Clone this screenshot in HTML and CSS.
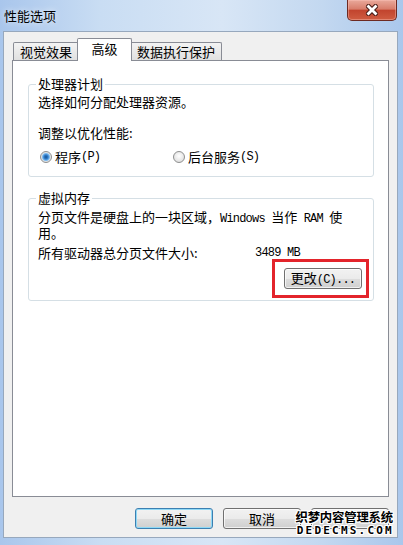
FILE: index.html
```html
<!DOCTYPE html>
<html lang="zh-CN">
<head>
    <meta charset="UTF-8">
    <meta name="viewport" content="width=device-width, initial-scale=1.0">
    <title>性能选项</title>
    <link rel="stylesheet" href="styles.css">
</head>
<body>
    <div class="window">
        <div class="titlebar">
            <span class="title">性能选项</span>
            <button class="close-btn" aria-label="关闭">
                <svg width="14" height="12" viewBox="0 0 14 12">
                    <path d="M3.5 2.5 L10.5 9.5 M10.5 2.5 L3.5 9.5" stroke="#4a1d17" stroke-width="5" stroke-linecap="round"/>
                    <path d="M3.5 2.5 L10.5 9.5 M10.5 2.5 L3.5 9.5" stroke="#ffffff" stroke-width="2.8" stroke-linecap="square"/>
                </svg>
            </button>
        </div>

        <div class="dialog">
            <div class="tabs">
                <div class="tab">视觉效果</div>
                <div class="tab active">高级</div>
                <div class="tab">数据执行保护</div>
            </div>

            <div class="tab-panel">
                <fieldset class="group">
                    <legend>处理器计划</legend>
                    <p class="intro">选择如何分配处理器资源。</p>
                    <p class="subhead">调整以优化性能:</p>
                    <div class="options">
                        <label class="option first"><span class="radio checked"></span>程序<span class="latin">(P)</span></label>
                        <label class="option"><span class="radio"></span>后台服务<span class="latin">(S)</span></label>
                    </div>
                </fieldset>

                <fieldset class="group memory">
                    <legend>虚拟内存</legend>
                    <p class="intro">分页文件是硬盘上的一块区域，<span class="latin">Windows </span>当作<span class="latin"> RAM </span>使<br>用。</p>
                    <div class="size-row">
                        <span class="size-label">所有驱动器总分页文件大小:</span>
                        <span class="latin">3489 MB</span>
                    </div>
                    <div class="change-row">
                        <span class="highlight">
                            <button class="btn">更改<span class="latin">(C)...</span></button>
                        </span>
                    </div>
                </fieldset>
            </div>

            <div class="actions">
                <button class="btn default">确定</button>
                <button class="btn">取消</button>
                <!-- label is hidden under the watermark in the screenshot -->
                <button class="btn" aria-label="应用" disabled></button>
            </div>

            <div class="watermark">
                <div class="watermark-cn">织梦内容管理系统</div>
                <div class="watermark-en">DEDECMS.COM</div>
            </div>
        </div>
    </div>
</body>
</html>
```

FILE: styles.css
```css
* {
    box-sizing: border-box;
}

body {
    margin: 0;
    width: 403px;
    height: 545px;
    overflow: hidden;
    font-family: "Noto Sans CJK SC", "Noto Sans", sans-serif;
    font-size: 13px;
    line-height: 14px;
    color: #000;
}

.latin {
    font-family: "Liberation Mono", monospace;
    font-size: 12px;
    letter-spacing: -0.8px;
}

/* window frame */
.window {
    height: 545px;
    display: flex;
    flex-direction: column;
    padding: 0 5px 7px 3px;
    background: linear-gradient(90deg, #a9c6ec 0%, #c9ddf3 25%, #d8e6f6 55%, #c3d8f0 80%, #aac7ec 100%);
}

.titlebar {
    height: 31px;
    display: flex;
    align-items: center;
    justify-content: space-between;
}

.title {
    padding-left: 1px;
    font-size: 13px;
    text-shadow: 0 0 6px rgba(255, 255, 255, 0.9);
}

.close-btn {
    align-self: flex-start;
    width: 50px;
    height: 21px;
    margin-right: 1px;
    padding: 0;
    display: flex;
    align-items: center;
    justify-content: center;
    border: 1px solid #6d2a22;
    border-top: none;
    border-radius: 0 0 5px 5px;
    background: linear-gradient(#e9a99b 0%, #d87d6b 45%, #c2442e 52%, #cf5c41 100%);
    box-shadow: inset 0 0 0 1px rgba(255, 200, 190, 0.4);
}

/* dialog body */
.dialog {
    position: relative;
    flex: 1;
    display: flex;
    flex-direction: column;
    padding: 6px 8px 8px;
    background: #f0f0f0;
    border: 1px solid #97a8bd;
}

.tabs {
    height: 22px;
    display: flex;
    align-items: flex-end;
    padding-left: 1px;
}

.tab {
    height: 18px;
    min-width: 51px;
    padding: 0 6px;
    display: flex;
    align-items: center;
    justify-content: center;
    border: 1px solid #898c95;
    border-bottom: none;
    border-radius: 2px 2px 0 0;
    background: linear-gradient(#f3f3f3, #e0e0e0);
}

.tab.active {
    position: relative;
    z-index: 1;
    height: 23px;
    min-width: 55px;
    margin: 0 -2px -1px;
    padding: 0 8px 2px;
    background: #fff;
}

.tab-panel {
    flex: 1;
    padding: 16px 14px 0 15px;
    background: #fff;
    border: 1px solid #898c95;
}

/* group boxes */
.group {
    margin: 0;
    min-width: 0;
    padding: 4px 9px 12px;
    border: 1px solid #d5dfe5;
    border-radius: 3px;
}

.group legend {
    margin-left: -2px;
    padding: 0 2px;
    line-height: 14px;
}

.group p {
    margin: 0;
}

.subhead {
    margin-top: 17px !important;
}

.options {
    display: flex;
    margin-top: 10px;
    padding-left: 2px;
}

.option {
    display: flex;
    align-items: center;
}

.option.first {
    width: 133px;
}

.radio {
    flex: none;
    width: 12px;
    height: 12px;
    margin-right: 3px;
    border: 1px solid #8e8f8f;
    border-radius: 50%;
    background: radial-gradient(circle at 50% 40%, #ffffff, #d6d6d6);
}

.radio.checked {
    background: radial-gradient(circle, #17508f 0, #2e7cc9 2px, #7cbaf0 3.5px, #e4e4e4 4.5px, #f7f7f7 100%);
}

.memory {
    margin-top: 14px;
    padding-bottom: 11px;
}

.memory .intro {
    margin-top: 1px;
}

.size-row {
    display: flex;
    margin-top: 6px;
}

.size-label {
    width: 217px;
}

.change-row {
    display: flex;
    justify-content: flex-end;
    margin-top: 8px;
    padding-right: 2px;
}

.highlight {
    position: relative;
    display: flex;
}

/* red annotation box drawn over the button */
.highlight::after {
    content: "";
    position: absolute;
    top: -9px;
    right: -7px;
    bottom: -9px;
    left: -12px;
    border: 3px solid #e3242b;
}

/* buttons */
.btn {
    width: 78px;
    height: 21px;
    padding: 0;
    font: inherit;
    color: #000;
    border: 1px solid #707070;
    border-radius: 3px;
    background: linear-gradient(#f2f2f2 0%, #ebebeb 50%, #dddddd 51%, #cfcfcf 100%);
    box-shadow: inset 0 0 0 1px rgba(255, 255, 255, 0.7);
}

.btn.default {
    border-color: #3c7fb1;
    box-shadow: inset 0 0 0 1px #8fd9f6;
}

.btn:disabled {
    color: #8a8a8a;
}

.actions {
    display: flex;
    justify-content: flex-end;
    gap: 10px;
    margin-top: 11px;
}

/* site watermark stamped over the corner */
.watermark {
    position: absolute;
    right: 4px;
    bottom: 1px;
    text-align: center;
    font-weight: bold;
    color: #000;
    text-shadow: 1px 0 #fff, -1px 0 #fff, 0 1px #fff, 0 -1px #fff,
        1px 1px #fff, -1px -1px #fff, 1px -1px #fff, -1px 1px #fff;
}

.watermark-cn {
    font-size: 12.4px;
    line-height: 15px;
    letter-spacing: -0.2px;
}

.watermark-en {
    font-family: "DejaVu Sans Mono", monospace;
    font-size: 11px;
    line-height: 11px;
    letter-spacing: 2.2px;
    margin-right: -2.2px;
}
```
